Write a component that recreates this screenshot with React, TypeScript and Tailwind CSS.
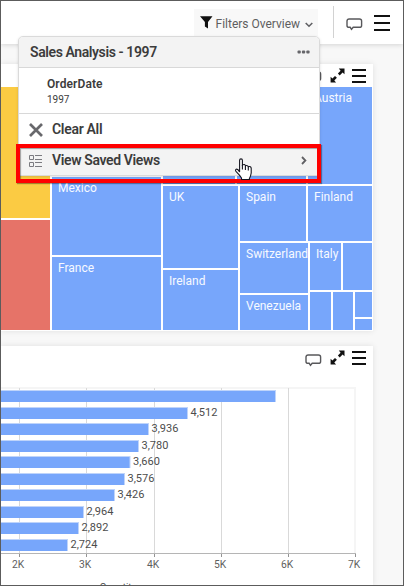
import type { ReactNode } from "react";

const BLUE = "bg-[#77a6fb]";

function Cell({ label, className = "" }: { label?: string; className?: string }) {
  return (
    <div className={`${BLUE} min-w-0 whitespace-nowrap pl-[6px] pt-[3px] text-[12px] leading-[16px] text-[#f7faff] ${className}`}>
      {label}
    </div>
  );
}

function Comment() {
  return (
    <svg width="17" height="13" viewBox="0 0 17 13" fill="none" stroke="#58585b" strokeWidth="1.4" className="block">
      <path d="M3.2 1H13.4Q15.6 1 15.6 3.1V7.4Q15.6 9.3 13.4 9.3H7.2L5.5 11.3L4.2 9.3H3.2Q1 9.3 1 7.4V3.1Q1 1 3.2 1Z" />
    </svg>
  );
}

function Expand() {
  return (
    <svg width="15" height="15" viewBox="0 0 15 15" className="block">
      <path d="M8.8 0.5H14.5V6.2L12.6 4.5L9.7 7.4L7.9 5.6L10.6 2.7Z M0.6 8.7L2.4 10.5L5 7.9L6.9 9.8L4.3 12.4L6.1 14.4H0.6Z" fill="#111" />
    </svg>
  );
}

function Burger({ large = false }: { large?: boolean }) {
  return (
    <div className={large ? "flex w-4 flex-col gap-[5px]" : "flex w-[14px] flex-col gap-1"}>
      <div className="h-[2px] bg-[#111]" />
      <div className="h-[2px] bg-[#111]" />
      <div className="h-[2px] bg-[#111]" />
    </div>
  );
}

function Card({ children, className }: { children: ReactNode; className: string }) {
  return <section className={`w-[372px] shrink-0 bg-white shadow-[0_0_6px_rgba(0,0,0,0.1)] ${className}`}>{children}</section>;
}

function Treemap() {
  return (
    <div className="flex h-[243px] w-[371px] gap-[2px]">
      <div className="flex w-[49px] flex-col gap-[2px]">
        <div className="h-[131px] bg-[#fbcb43]" />
        <div className="flex-1 bg-[#e67368]" />
      </div>
      <div className="flex w-[109px] flex-col gap-[2px]">
        <Cell className="h-[88px]" />
        <Cell label="Mexico" className="h-[78px]" />
        <Cell label="France" className="flex-1" />
      </div>
      <div className="flex w-[209px] flex-col gap-[2px]">
        <div className="flex h-[97px] gap-[2px]">
          <Cell className="w-[72px]" />
          <Cell className="w-[69px]" />
          <Cell label="Austria" className="w-16" />
        </div>
        <div className="flex flex-1 gap-[2px]">
          <div className="flex w-[75px] flex-col gap-[2px]">
            <Cell label="UK" className="h-[82px]" />
            <Cell label="Ireland" className="flex-1" />
          </div>
          <div className="flex w-[132px] flex-col gap-[2px]">
            <div className="flex h-[55px] gap-[2px]">
              <Cell label="Spain" className="w-[66px]" />
              <Cell label="Finland" className="w-16" />
            </div>
            <div className="flex flex-1 gap-[2px]">
              <div className="flex w-[68px] flex-col gap-[2px]">
                <Cell label="Switzerland" className="h-[50px]" />
                <Cell label="Venezuela" className="flex-1" />
              </div>
              <div className="flex w-[62px] flex-col gap-[2px]">
                <div className="flex h-[47px] gap-[2px]">
                  <Cell label="Italy" className="w-[31px]" />
                  <Cell className="w-[29px]" />
                </div>
                <div className="flex flex-1 gap-[2px]">
                  <Cell className="w-[21px]" />
                  <Cell className="w-5" />
                  <div className="flex w-[17px] flex-col gap-[2px]">
                    <Cell className="h-[25px]" />
                    <Cell className="h-[11px]" />
                  </div>
                </div>
              </div>
            </div>
          </div>
        </div>
      </div>
    </div>
  );
}

const bars: { y: number; end: number; value?: string }[] = [
  { y: 390, end: 276 },
  { y: 407, end: 188, value: "4,512" },
  { y: 423, end: 149, value: "3,936" },
  { y: 440, end: 139, value: "3,780" },
  { y: 456, end: 130.5, value: "3,660" },
  { y: 473, end: 125, value: "3,576" },
  { y: 489, end: 115, value: "3,426" },
  { y: 506, end: 84, value: "2,964" },
  { y: 522, end: 79, value: "2,892" },
  { y: 539, end: 68, value: "2,724" },
];

const ticks: [number, string][] = [
  [19, "2K"],
  [86, "3K"],
  [154, "4K"],
  [221, "5K"],
  [288, "6K"],
  [355, "7K"],
];

function BarChart() {
  return (
    <svg width="372" height="204" viewBox="1 381 372 204" className="block">
      <rect x="1" y="387" width="354" height="2" fill="#f5f5f5" />
      <rect x="354" y="387" width="2" height="166" fill="#f5f5f5" />
      {ticks.map(([x, label]) => (
        <g key={label}>
          {x < 355 && <rect x={x} y="388" width="1" height="165" fill="#d9d9d9" />}
          <rect x={x} y="553" width="1" height="4" fill="#949494" />
          <text x={x - 0.8} y="568" fontSize="10.3" textAnchor="middle" fill="#606060">{label}</text>
        </g>
      ))}
      <rect x="1" y="553" width="355" height="1" fill="#b5b5b5" />
      {bars.map((b) => (
        <g key={b.y}>
          <rect x="1" y={b.y} width={b.end - 1} height="12" fill="#bfd4fa" />
          <rect x="1" y={b.y + 1} width={b.end - 2} height="11" fill="#77a6fb" />
          {b.value && <text x={b.end + 2.5} y={b.y + 9} fontSize="11" fill="#4d4d4d">{b.value}</text>}
        </g>
      ))}
      <text x="118" y="590" fontSize="9.8" textAnchor="middle" fill="#444">Quantity</text>
    </svg>
  );
}

function FiltersMenu() {
  return (
    <div className="absolute left-[17px] top-[35px] h-[140px] w-[302px] overflow-hidden rounded-t-[5px] border border-[#dadada] bg-white text-[#3c3c3c] shadow-[0_1px_3px_rgba(0,0,0,0.12)]">
      <div className="flex h-[31px] items-center justify-between border-b border-[#d8d8d8] bg-[#f3f3f3] pl-[11px] pr-[9px]">
        <span className="text-[14px] font-semibold tracking-[-0.4px]">Sales Analysis - 1997</span>
        <svg width="13" height="4" viewBox="0 0 13 4" fill="#66666a">
          <rect x="0.5" y="0.5" width="3.3" height="3" rx="1" />
          <rect x="4.9" y="0.5" width="3.3" height="3" rx="1" />
          <rect x="9.3" y="0.5" width="3.3" height="3" rx="1" />
        </svg>
      </div>
      <div className="h-[46px] border-b border-[#d8d8d8] pl-7 pt-[9px]">
        <div className="text-[12px] font-semibold leading-[15px] tracking-[0.1px]">OrderDate</div>
        <div className="mt-px text-[10px] leading-[14px]">1997</div>
      </div>
      <div className="flex h-[32px] items-center pl-[10px]">
        <svg width="14" height="14" viewBox="0 0 14 14" stroke="#68686c" strokeWidth="2.7" fill="none">
          <path d="M1 1L13 13M13 1L1 13" />
        </svg>
        <span className="-mt-px ml-[9px] text-[14px] font-semibold tracking-[-0.3px]">Clear All</span>
      </div>
      <div className="flex h-[29px] items-center bg-[#f3f3f3] pl-[10px] pr-[12px]">
        <svg width="14" height="14" viewBox="0 0 14 14" stroke="#7b7b80" fill="none">
          <path d="M0.5 1.5H4.5V5.5H0.5ZM0.5 8.5H4.5V12.5H0.5ZM6 1.5H13M6 5.5H13M6 8.5H13M6 12.5H13" />
        </svg>
        <span className="ml-[9px] flex-1 text-[14px] font-semibold tracking-[-0.37px]">View Saved Views</span>
        <svg width="6" height="9" viewBox="0 0 6 9" stroke="#606064" strokeWidth="1.8" fill="none">
          <path d="M1 1L4.4 4.5L1 8" />
        </svg>
      </div>
    </div>
  );
}

export default function App() {
  return (
    <div className="relative flex h-[586px] w-[404px] flex-col overflow-hidden border border-[#5c5c5c] bg-[#f8f8f8] font-['Roboto','Liberation_Sans',sans-serif]">
      <header className="flex h-[43px] shrink-0 bg-white shadow-[0_1px_5px_rgba(0,0,0,0.15)]">
        <div className="ml-[193px] mt-2 flex h-[27px] w-[124px] items-center bg-[#f8f8f8] pl-[6px] text-[#5e5e60]">
          <svg width="13" height="13" viewBox="0 0 13 13" className="mt-[-1px] shrink-0">
            <path d="M0 0.3H12.5L8 6V12.5L4.9 10.5V6Z" fill="#111" />
          </svg>
          <span className="ml-[2.5px] mt-[3px] whitespace-nowrap text-[12px]">Filters Overview</span>
          <svg width="8" height="6" viewBox="0 0 8 6" stroke="#606064" strokeWidth="1.6" fill="none" className="ml-[5px] mt-[5px] shrink-0">
            <path d="M0.7 1L4 4.2L7.3 1" />
          </svg>
        </div>
        <div className="ml-[15px] mt-[5px] h-8 w-px bg-[#d2d2d2]" />
        <div className="ml-3 mt-[17px]"><Comment /></div>
        <div className="ml-[11px] mt-[14px]"><Burger large /></div>
      </header>

      <Card className="mt-5 h-[267px]">
        <div className="flex h-[23px] justify-end pr-[7px]">
          <div className="mr-[8px] mt-[7px]"><Comment /></div>
          <div className="mr-[7px] mt-[4px]"><Expand /></div>
          <div className="mt-[5px]"><Burger /></div>
        </div>
        <Treemap />
      </Card>

      <Card className="mt-[15px] h-[239px]">
        <div className="flex h-[35px] justify-end pr-[7px]">
          <div className="mr-[8px] mt-[8px]"><Comment /></div>
          <div className="mr-[7px] mt-[4px]"><Expand /></div>
          <div className="mt-[5px]"><Burger /></div>
        </div>
        <BarChart />
      </Card>

      <FiltersMenu />
      <div className="absolute left-[15px] top-[143px] h-[39px] w-[305px] border-4 border-[#ff0000] shadow-[1px_1px_1px_rgba(0,0,0,0.35),inset_1px_1px_1px_rgba(0,0,0,0.35)]" />
      <svg width="19" height="23" viewBox="0 0 19 23" className="absolute left-[233px] top-[157px]">
        <path d="M5.6 14V2.3Q5.6 0.9 7 0.9Q8.4 0.9 8.4 2.3V7Q10.8 5.8 11.4 7.7Q13.7 7 14.3 8.7Q17 8 17.2 10.4V15Q16.8 18 15.4 20.5V21.5H7.5V20Q6 17.5 2.2 13.7Q0.8 12 2.2 11.2Q3.8 10.5 5.6 14Z" fill="white" stroke="#15151f" strokeWidth="1.1" />
        <path d="M8.4 7V11.5M11.4 7.7V12M14.3 8.7V12.5" stroke="#15151f" strokeWidth="1.1" />
      </svg>
    </div>
  );
}
